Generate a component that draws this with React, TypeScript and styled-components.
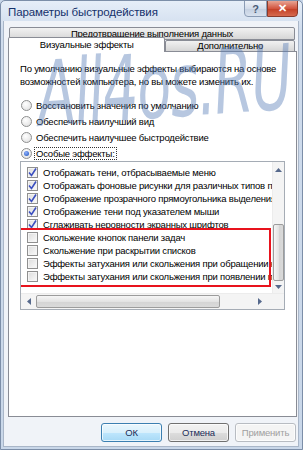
import React from "react";
import styled, { createGlobalStyle } from "styled-components";

const GlobalStyle = createGlobalStyle`
  html, body {
    margin: 0;
    padding: 0;
    background: #c8d6e8;
  }
  * {
    box-sizing: border-box;
  }
`;

const Window = styled.div`
  position: relative;
  width: 303px;
  height: 450px;
  display: flex;
  flex-direction: column;
  background: linear-gradient(#e6eef8, #cfdced 30px, #c9d7e9);
  border: 1px solid #7c8ea8;
  border-radius: 5px 5px 0 0;
  overflow: hidden;
  font-family: "Liberation Sans", Arial, sans-serif;
  font-size: 9.5px;
  letter-spacing: -0.2px;
  color: #000;
`;

const TitleBar = styled.div`
  height: 20px;
  display: flex;
  align-items: flex-start;
  justify-content: space-between;
  padding-left: 7px;
`;

const Title = styled.div`
  padding-top: 5px;
  font-size: 11.5px;
  letter-spacing: -0.1px;
  color: #15316b;
`;

const Caption = styled.div`
  display: flex;
  margin-right: 4px;
  margin-top: -1px;
`;

const CapButton = styled.div<{ $close?: boolean }>`
  width: ${(p) => (p.$close ? 31 : 23)}px;
  height: 17px;
  display: flex;
  align-items: center;
  justify-content: center;
  border: 1px solid ${(p) => (p.$close ? "#8a3b2c" : "#8a9bb4")};
  border-radius: ${(p) => (p.$close ? "0 0 4px 0" : "0 0 0 4px")};
  background: ${(p) =>
    p.$close
      ? "linear-gradient(#e8a493, #d2553f 50%, #c23e24 51%, #d66a4f)"
      : "linear-gradient(#eef2f8, #d3dcea 50%, #c3cfe0 51%, #d8e1ee)"};
  color: ${(p) => (p.$close ? "#fff" : "#4a5a76")};
  font-weight: bold;
  font-size: 11px;
`;

const Client = styled.div`
  flex: 1;
  margin: 0 3px 2px 2px;
  background: #f0f3f8;
  border-left: 1px solid #a9b6c8;
  border-right: 1px solid #a9b6c8;
  border-bottom: 1px solid #a9b6c8;
  display: flex;
  flex-direction: column;
  padding: 6px 3px 0 4px;
`;

const TabsBack = styled.div`
  display: flex;
  padding-left: 1px;
`;

const Tab = styled.div<{ $w: number; $h: number; $active?: boolean; $back?: boolean }>`
  width: ${(p) => p.$w}px;
  height: ${(p) => p.$h}px;
  display: flex;
  align-items: ${(p) => (p.$back ? "flex-start" : "center")};
  justify-content: center;
  padding-top: ${(p) => (p.$back ? 1 : 0)}px;
  border: 1px solid #898c95;
  border-bottom: ${(p) => (p.$active ? "none" : "1px solid #898c95")};
  border-radius: 2px 2px 0 0;
  background: ${(p) =>
    p.$active ? "#ffffff" : "linear-gradient(#f2f2f2, #e4e4e4 50%, #d6d6d6)"};
  line-height: 10px;
  white-space: nowrap;
  overflow: hidden;
  position: relative;
  z-index: ${(p) => (p.$active ? 2 : 1)};
`;

const TabsFront = styled.div`
  display: flex;
  align-items: flex-end;
  margin-top: -3px;
  margin-bottom: -1px;
`;

const Panel = styled.div`
  height: 366px;
  width: 289px;
  background: #fff;
  border: 1px solid #898c95;
  padding: 10px 10px 0 10px;
  display: flex;
  flex-direction: column;
`;

const Intro = styled.div`
  line-height: 13px;
  margin-bottom: 9px;
  padding-left: 1px;
  white-space: nowrap;
`;

const RadioRow = styled.div`
  display: flex;
  align-items: center;
  height: 16px;
  gap: 3px;
  padding-left: 2px;
`;

const RadioDot = styled.div<{ $on?: boolean }>`
  width: 11px;
  height: 11px;
  border-radius: 50%;
  border: 1px solid #8e8f8f;
  background: radial-gradient(circle at 40% 35%, #ffffff, #dcdcdc);
  display: flex;
  align-items: center;
  justify-content: center;
  &::after {
    content: "";
    display: ${(p) => (p.$on ? "block" : "none")};
    width: 5px;
    height: 5px;
    border-radius: 50%;
    background: radial-gradient(circle at 40% 35%, #8fb2ff, #1d4fb8);
  }
`;

const RadioText = styled.span<{ $focus?: boolean }>`
  white-space: nowrap;
  outline: ${(p) => (p.$focus ? "1px dotted #333" : "none")};
  padding: 0 1px;
`;

const ListBox = styled.div`
  margin-top: 0;
  margin-left: 1px;
  width: 265px;
  height: 149px;
  border: 1px solid #a5acb5;
  display: grid;
  grid-template-columns: 251px 12px;
  grid-template-rows: 1fr 16px;
`;

const Items = styled.div`
  position: relative;
  padding: 4px 0 0 6px;
  overflow: hidden;
`;

const Item = styled.div`
  display: flex;
  align-items: center;
  height: 13px;
  gap: 5px;
  white-space: nowrap;
`;

const Box = styled.div`
  flex: none;
  width: 11px;
  height: 11px;
  border: 1px solid #8f8f8f;
  background: linear-gradient(135deg, #dcdcdc, #fbfbfb);
  display: flex;
  align-items: center;
  justify-content: center;
  box-shadow: inset 0 0 0 1px #f4f4f4;
`;

const VScroll = styled.div`
  background: #f4f4f4;
  border-left: 1px solid #ececec;
  display: flex;
  flex-direction: column;
  align-items: center;
  padding: 6px 0 4px;
`;

const Spacer = styled.div<{ $w?: number }>`
  flex: ${(p) => (p.$w ? "none" : 1)};
  width: ${(p) => (p.$w ? `${p.$w}px` : "auto")};
`;

const VThumb = styled.div`
  width: 11px;
  height: 57px;
  margin-bottom: 4px;
  border: 1px solid #9c9c9c;
  border-radius: 2px;
  background: linear-gradient(90deg, #f6f6f6, #e3e3e3 50%, #d4d4d4 51%, #dadada);
`;

const HThumb = styled.div`
  width: 184px;
  height: 13px;
  margin-left: 5px;
  border: 1px solid #9c9c9c;
  border-radius: 2px;
  background: linear-gradient(#f6f6f6, #e3e3e3 50%, #d4d4d4 51%, #dadada);
`;

const HScroll = styled.div`
  grid-column: 1 / 3;
  background: #f4f4f4;
  border-top: 1px solid #ececec;
  display: flex;
  align-items: center;
  padding: 0 0 0 6px;
`;

const Highlight = styled.div`
  position: absolute;
  left: -3px;
  top: 66px;
  width: 253px;
  height: 59px;
  border: 2px solid #e8131d;
  pointer-events: none;
`;

const Buttons = styled.div`
  display: flex;
  justify-content: flex-end;
  gap: 6px;
  padding: 6px 0 0 0;
  margin-right: -1px;
`;

const Button = styled.div<{ $primary?: boolean; $disabled?: boolean }>`
  width: 61px;
  height: 19px;
  display: flex;
  align-items: center;
  justify-content: center;
  border-radius: 3px;
  color: ${(p) => (p.$disabled ? "#a0a0a0" : "#1b2c57")};
  border: 1px solid
    ${(p) => (p.$primary ? "#3c7fb1" : p.$disabled ? "#b8bcc2" : "#707070")};
  background: ${(p) =>
    p.$primary
      ? "linear-gradient(#eaf6fd, #d9f0fc 50%, #bee6fd 51%, #a7d9f5)"
      : p.$disabled
      ? "#f4f4f4"
      : "linear-gradient(#f2f2f2, #ebebeb 50%, #dddddd 51%, #cfcfcf)"};
  box-shadow: inset 0 0 0 1px rgba(255, 255, 255, 0.7);
`;

const Watermark = styled.div`
  position: absolute;
  left: 40px;
  top: 42px;
  height: 104px;
  font-family: "DejaVu Sans", sans-serif;
  font-style: italic;
  font-size: 90px;
  letter-spacing: -2px;
  line-height: 104px;
  color: rgba(84, 122, 180, 0.42);
  white-space: nowrap;
  pointer-events: none;
  transform-origin: left bottom;
  transform: rotate(-4deg) scaleX(0.62);
  z-index: 5;
`;

const Tick = () => (
  <svg width="9" height="9" viewBox="0 0 9 9">
    <path d="M1 4.5 L3.5 7.5 L8 0.5" fill="none" stroke="#3b4fc0" strokeWidth="1.6" />
  </svg>
);

const Arrow = ({ dir }: { dir: "up" | "down" | "left" | "right" }) => {
  const pts = {
    up: "0,4 3.5,0 7,4",
    down: "0,0 3.5,4 7,0",
    left: "4,0 0,3.5 4,7",
    right: "0,0 4,3.5 0,7",
  }[dir];
  const w = dir === "up" || dir === "down" ? 7 : 4;
  const h = dir === "up" || dir === "down" ? 4 : 7;
  return (
    <svg width={w} height={h} viewBox={`0 0 ${w} ${h}`}>
      <polygon points={pts} fill="#56698c" />
    </svg>
  );
};

const items: { text: string; on: boolean }[] = [
  { text: "Отображать тени, отбрасываемые меню", on: true },
  { text: "Отображать фоновые рисунки для различных типов папок", on: true },
  { text: "Отображение прозрачного прямоугольника выделения", on: true },
  { text: "Отображение тени под указателем мыши", on: true },
  { text: "Сглаживать неровности экранных шрифтов", on: true },
  { text: "Скольжение кнопок панели задач", on: false },
  { text: "Скольжение при раскрытии списков", on: false },
  { text: "Эффекты затухания или скольжения при обращении к меню", on: false },
  { text: "Эффекты затухания или скольжения при появлении подсказок", on: false },
];

const radios = [
  "Восстановить значения по умолчанию",
  "Обеспечить наилучший вид",
  "Обеспечить наилучшее быстродействие",
  "Особые эффекты:",
];

export default function App() {
  return (
    <>
      <GlobalStyle />
      <Window>
        <TitleBar>
          <Title>Параметры быстродействия</Title>
          <Caption>
            <CapButton>?</CapButton>
            <CapButton $close>✕</CapButton>
          </Caption>
        </TitleBar>
        <Client>
          <TabsBack>
            <Tab $w={286} $h={13} $back>
              Предотвращение выполнения данных
            </Tab>
          </TabsBack>
          <TabsFront>
            <Tab $w={158} $h={15} $active>
              Визуальные эффекты
            </Tab>
            <Tab $w={130} $h={12}>
              Дополнительно
            </Tab>
          </TabsFront>
          <Panel>
            <Intro>
              По умолчанию визуальные эффекты выбираются на основе
              <br />
              возможностей компьютера, но вы можете изменить их.
            </Intro>
            {radios.map((r, i) => (
              <RadioRow key={r}>
                <RadioDot $on={i === 3} />
                <RadioText $focus={i === 3}>{r}</RadioText>
              </RadioRow>
            ))}
            <ListBox>
              <Items>
                {items.map((it) => (
                  <Item key={it.text}>
                    <Box>{it.on && <Tick />}</Box>
                    {it.text}
                  </Item>
                ))}
                <Highlight />
              </Items>
              <VScroll>
                <Arrow dir="up" />
                <Spacer />
                <VThumb />
                <Arrow dir="down" />
              </VScroll>
              <HScroll>
                <Arrow dir="left" />
                <HThumb />
                <Spacer />
                <Arrow dir="right" />
                <Spacer $w={22} />
              </HScroll>
            </ListBox>
          </Panel>
          <Buttons>
            <Button $primary>ОК</Button>
            <Button>Отмена</Button>
            <Button $disabled>Применить</Button>
          </Buttons>
        </Client>
        <Watermark>All4os.RU</Watermark>
      </Window>
    </>
  );
}
